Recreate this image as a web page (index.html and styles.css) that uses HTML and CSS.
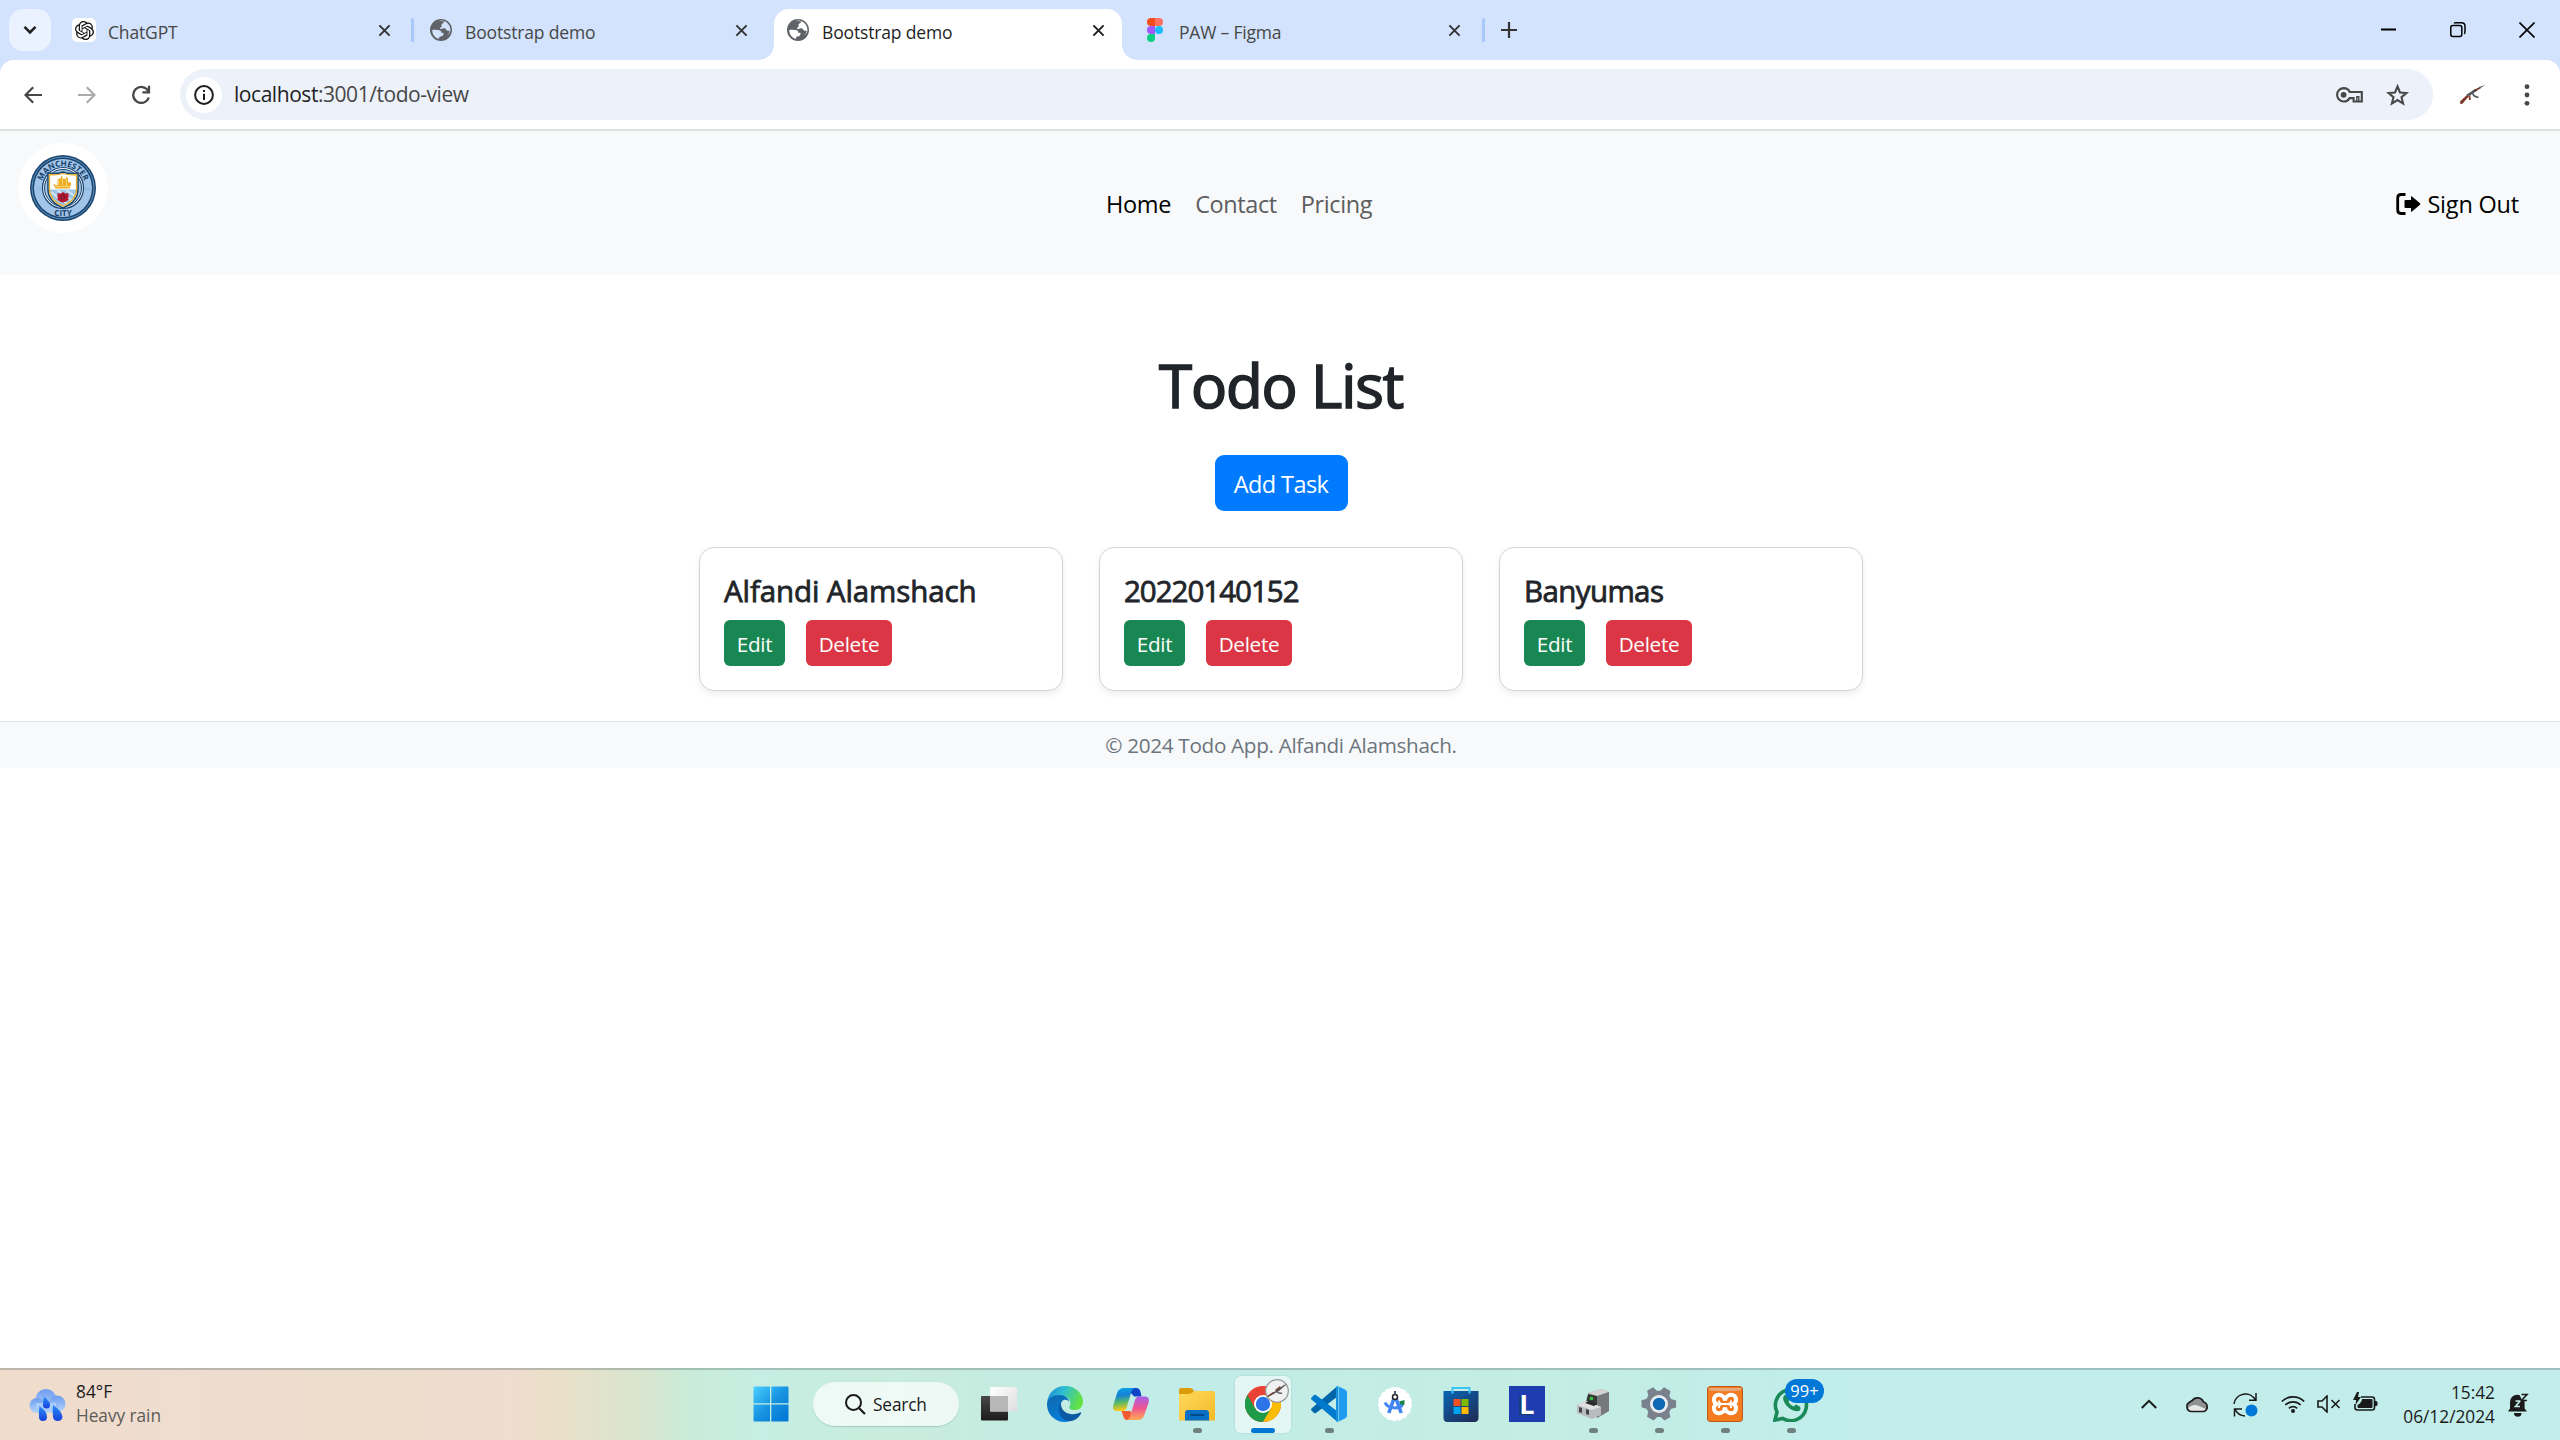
FILE: index.html
```html
<!DOCTYPE html>
<html lang="en">
<head>
<meta charset="utf-8">
<title>Bootstrap demo</title>
<link rel="stylesheet" href="styles.css">
</head>
<body>
<svg width="0" height="0" class="defs">
  <defs>
    <symbol id="x" viewBox="0 0 14 14"><path d="M1.500 1.500l11 11M12.500 1.500l-11 11" stroke="currentColor" stroke-width="2.100" fill="none"/></symbol>
    <symbol id="globe" viewBox="2 2 20 20"><circle cx="12" cy="12" r="10" fill="#5f6368"/><path fill="var(--tab)" d="M4 12c2-.6 5 0 6.500.2 1.500.2 1.800 1 1.600 2.300h2.200c-.1 2-.5 3-1.900 3.200-1.400.1-2.200.4-2.200 2.300C6.500 19.300 4 16 4 12zm6-8c1.500-.4 3.500-.3 4.800.2-.2 1.200-.8 1.900-1.800 2-.6.800-.9 1.400-.4 2.200.2 1-.5 1.300-1.400 1.400-.4.900 0 1.300 1.400 1.400.9-.8 1.900-1.100 3.300-.6 1 1.500 2 2.400 4 2.100-.3 1.700-1.200 3.500-2.300 4.700 1.800-1.500 3-3.600 3-5.400 0-4-3-7.800-7-8.400C12 3.200 11 3.500 10 4z"/></symbol>
  </defs>
</svg>

<header class="tabstrip">
  <button class="tab-search"><svg width="14" height="10" viewBox="0 0 14 10"><path d="M1.500 1.800L7 7.300l5.500-5.500" fill="none" stroke="#1f1f1f" stroke-width="2.600"/></svg></button>
  <div class="tab first">
    <span class="gpt"><svg width="19" height="19" viewBox="0 0 24 24"><path fill="#111" d="M22.280 9.820a5.980 5.980 0 00-.52-4.910 6.050 6.050 0 00-6.510-2.900A6.070 6.070 0 004.980 4.180a5.980 5.980 0 00-4 2.900 6.050 6.050 0 00.740 7.100 5.980 5.980 0 00.510 4.910 6.050 6.050 0 006.510 2.900A5.980 5.980 0 0013.260 24a6.060 6.060 0 005.770-4.210 5.990 5.990 0 004-2.900 6.060 6.060 0 00-.75-7.070zm-9.020 12.610a4.480 4.480 0 01-2.880-1.040l.14-.08 4.780-2.760a.8.8 0 00.39-.68v-6.740l2.020 1.170a.07.07 0 01.04.05v5.580a4.500 4.500 0 01-4.490 4.500zM3.600 18.300a4.470 4.470 0 01-.54-3.010l.14.090 4.780 2.760a.77.77 0 00.78 0l5.840-3.370v2.330a.08.08 0 01-.03.060L9.740 19.950a4.500 4.500 0 01-6.140-1.650zM2.340 7.900a4.490 4.490 0 012.370-1.970V11.600a.77.77 0 00.39.68l5.810 3.350-2.020 1.170a.08.08 0 01-.07 0l-4.830-2.790A4.500 4.500 0 012.340 7.900zm16.600 3.860L13.100 8.360l2.020-1.160a.08.08 0 01.07 0l4.830 2.790a4.490 4.490 0 01-.68 8.110v-5.680a.79.79 0 00-.4-.66zm2.010-3.020l-.14-.09-4.770-2.780a.78.78 0 00-.79 0L9.410 9.230V6.900a.07.07 0 01.03-.06l4.830-2.790a4.500 4.500 0 016.680 4.660zM8.310 12.860l-2.020-1.160a.08.08 0 01-.04-.06V6.070a4.500 4.500 0 017.380-3.450l-.14.080-4.780 2.760a.8.8 0 00-.39.680zm1.100-2.360l2.600-1.500 2.610 1.500v3l-2.600 1.500-2.610-1.500z"/></svg></span>
    <span class="tab-title">ChatGPT</span>
    <svg class="close"><use href="#x"/></svg>
  </div>
  <i class="sep"></i>
  <div class="tab second">
    <svg class="fav"><use href="#globe"/></svg>
    <span class="tab-title demo">Bootstrap demo</span>
    <svg class="close"><use href="#x"/></svg>
  </div>
  <div class="tab active">
    <svg class="fav"><use href="#globe"/></svg>
    <span class="tab-title demo">Bootstrap demo</span>
    <svg class="close"><use href="#x"/></svg>
  </div>
  <div class="tab fourth">
    <svg width="16" height="24" viewBox="0 0 16 24"><path d="M4 0h4v8H4a4 4 0 010-8z" fill="#f24e1e"/><path d="M8 0h4a4 4 0 010 8H8z" fill="#ff7262"/><path d="M4 8h4v8H4a4 4 0 010-8z" fill="#a259ff"/><circle cx="12" cy="12" r="4" fill="#1abcfe"/><path d="M4 16h4v4a4 4 0 11-4-4z" fill="#0acf83"/></svg>
    <span class="tab-title figma">PAW – Figma</span>
    <svg class="close"><use href="#x"/></svg>
  </div>
  <i class="sep"></i>
  <svg class="plus" width="16" height="16" viewBox="0 0 16 16"><path d="M8 0v16M0 8h16" stroke="#333" stroke-width="2.200"/></svg>
  <div class="window-buttons">
    <svg width="16" height="16" viewBox="0 0 16 16"><path d="M0 7.500h15" stroke="#000" stroke-width="2"/></svg>
    <svg width="16" height="16" viewBox="0 0 16 16" fill="none" stroke="#000" stroke-width="1.500"><rect x=".8" y="3.500" width="11" height="11" rx="2"/><path d="M4 1.300Q4.500.8 6 .8h5.500Q15 .8 15 4.300v5.500q0 1.500-.8 2"/></svg>
    <svg width="16" height="16" viewBox="0 0 16 16"><path d="M.5.500l15 15M15.500.500l-15 15" stroke="#000" stroke-width="1.600"/></svg>
  </div>
</header>

<div class="toolbar-back">
  <div class="toolbar">
    <svg width="18" height="18" viewBox="0 0 18 18" fill="none" stroke="#474747" stroke-width="2.200"><path d="M18 9H1.800M9.200 1.200L1.500 9l7.700 7.800"/></svg>
    <svg width="18" height="18" viewBox="0 0 18 18" fill="none" stroke="#ababab" stroke-width="2.200"><path d="M0 9h16.200M8.800 1.200L16.500 9l-7.700 7.800"/></svg>
    <svg width="20" height="20" viewBox="0 0 20 20" fill="none" stroke="#474747" stroke-width="2.300"><path d="M17.800 12.500A8 8 0 1117.200 6M18 .8v6.600h-6.600"/></svg>
    <div class="omnibox">
      <span class="chip"><svg width="20" height="20" viewBox="0 0 20 20"><circle cx="10" cy="10" r="8.900" fill="none" stroke="#1f1f1f" stroke-width="2"/><path d="M9 5h2v2.100H9zM9 8.800h2V15H9z" fill="#1f1f1f"/></svg></span>
      <span class="url"><b>localhost</b>:3001/todo-view</span>
      <svg width="27" height="16" viewBox="0 0 27 16"><path d="M7.800 1.100a6.700 6.700 0 100 13.400c2.700 0 4.700-1.500 5.800-3.400h4v3.400h8.200V5h-12A6.700 6.700 0 007.800 1.100z" fill="none" stroke="#474747" stroke-width="2.100"/><circle cx="7.600" cy="7.800" r="2.900" fill="#474747"/><path d="M20.800 14V9.800h2V14" fill="none" stroke="#474747" stroke-width="1.400"/></svg>
      <svg class="star" width="23" height="22" viewBox="0 0 23 22"><path d="M11.500 2.500l2.500 6 6.500.5-5 4.200 1.600 6.400-5.600-3.500-5.600 3.500 1.600-6.400-5-4.200 6.500-.5z" fill="none" stroke="#474747" stroke-width="2.100"/></svg>
    </div>
    <svg class="profile" width="26" height="20" viewBox="0 0 26 20"><path d="M0 16.500l7-6.500 2 1-5.500 6.500-1.500 1.500h-1.500z" fill="#7a3526"/><path d="M6 10l9-6 2.500 1.500L9 11z" fill="#4d5457"/><path d="M14 5l6-3.300.8 1.500L15 6.500z" fill="#74352a"/><path d="M19 2l6.500-2-5.500 3.200z" fill="#555"/><path d="M8.500 11l1.800-1 .5 5H9z" fill="#863d2b"/><path d="M12.500 8q1 4 6 4.300" fill="none" stroke="#59656a" stroke-width="1.800"/></svg>
    <svg class="dots" width="6" height="22" viewBox="0 0 6 22" fill="#474747"><circle cx="3" cy="2.700" r="2.400"/><circle cx="3" cy="11" r="2.400"/><circle cx="3" cy="19.300" r="2.400"/></svg>
  </div>
</div>

<div class="page">
  <nav class="navbar">
    <span class="brand">
      <svg width="66" height="66" viewBox="0 0 66 66">
        <defs><path id="arcTop" d="M10.800 33.500a22.200 22.200 0 0144.400 0"/></defs>
        <circle cx="33" cy="33" r="33" fill="#1c4470"/><circle cx="33" cy="33" r="31" fill="none" stroke="#5d95bd" stroke-width="1"/><circle cx="33" cy="33" r="29" fill="#a0c5e8"/>
        <circle cx="33" cy="33" r="20.500" fill="#e9f2fa" stroke="#1c4470" stroke-width="1.200"/><circle cx="33" cy="33" r="18.500" fill="#a0c5e8" stroke="#1c4470" stroke-width="1"/>
        <path d="M18 18q8 1.500 15-1 7 2.500 15 1v16c0 9-6 15-15 19-9-4-15-10-15-19z" fill="#fff" stroke="#17406b" stroke-width="1.500"/>
        <path d="M19.500 34.500h27c0 8-5.500 13-13.500 16.500-8-3.500-13.500-8.500-13.500-16.500z" fill="#9cc5e8"/><path d="M21 37l16 12M27 35l15 10.500M36 35l9.500 6.500" stroke="#d3e6f4" stroke-width="2"/>
        <path d="M19.500 19.500q7 1 13.500-1 6.500 2 13.500 1v15c0 8-5.500 13-13.500 16.500-8-3.500-13.500-8.500-13.500-16.500z" fill="none" stroke="#e5b42f" stroke-width="1.300"/>
        <path d="M23 29q3 1.500 4.500 1v-5.500l3.500-1.500v-2l1.500.500v2l3.500.500v-2l2 1v4l3 .5v2l-1.500 4h-14z" fill="#eead25"/><path d="M28.500 25v5M32.500 23v7M36.500 24v7M25 31.500h15" stroke="#f9dd8c" stroke-width=".8"/>
        <path d="M33 37l2.300 1.500 3-.3.400 3-.8 2.400 1 .9-2.900 2-3 .9-3-.9-2.900-2 1-.9-.8-2.400.4-3 3 .3z" fill="#b9122e"/><circle cx="33" cy="42" r="2" fill="none" stroke="#5d2438" stroke-width="1"/>
        <text class="crest-name"><textPath href="#arcTop" startOffset="50%" text-anchor="middle">MANCHESTER</textPath></text>
        <text class="crest-city" x="33" y="60.800" text-anchor="middle">CITY</text>
        <text class="crest-year" x="8.800" y="35.500" text-anchor="middle">18</text><text class="crest-year" x="57.200" y="35.500" text-anchor="middle">94</text>
      </svg>
    </span>
    <div class="links"><a class="home">Home</a><a class="contact">Contact</a><a class="pricing">Pricing</a></div>
    <a class="signout"><svg width="25" height="22" viewBox="0 0 25 22"><path d="M9.500 1.500H5Q1.700 1.500 1.700 5v12q0 3.500 3.300 3.500h4.500" fill="none" stroke="#000" stroke-width="2.800"/><path d="M8.500 8q0-1 1-1H15V4q0-1.300 1-.5l8 6.800q.8.700 0 1.400l-8 6.800q-1 .8-1-.5v-3H9.500q-1 0-1-1z" fill="#000"/></svg><span>Sign Out</span></a>
  </nav>
  <main>
    <h1>Todo List</h1>
    <a class="btn add">Add Task</a>
    <section class="cards">
      <article class="card"><h5 class="name">Alfandi Alamshach</h5><div class="actions"><a class="btn edit">Edit</a><a class="btn delete">Delete</a></div></article>
      <article class="card"><h5 class="number">20220140152</h5><div class="actions"><a class="btn edit">Edit</a><a class="btn delete">Delete</a></div></article>
      <article class="card"><h5 class="city">Banyumas</h5><div class="actions"><a class="btn edit">Edit</a><a class="btn delete">Delete</a></div></article>
    </section>
  </main>
  <footer class="footer">© 2024 Todo App. Alfandi Alamshach.</footer>
</div>

<div class="taskbar">
  <div class="weather">
    <svg width="37" height="34" viewBox="0 0 37 34"><defs><linearGradient id="cl" x2="0" y2="1"><stop stop-color="#6e9cf0"/><stop offset="1" stop-color="#b5d6fb"/></linearGradient><linearGradient id="dr" x2="0" y2="1"><stop stop-color="#2a8df5"/><stop offset="1" stop-color="#1740dd"/></linearGradient></defs><circle cx="17" cy="10.500" r="10.500" fill="url(#cl)"/><circle cx="28" cy="15" r="8.500" fill="url(#cl)"/><circle cx="8" cy="16.500" r="7.500" fill="url(#cl)"/><rect x="7" y="14" width="20" height="9.500" fill="#a9cdfa"/><g fill="url(#dr)"><path d="M15 7.500q6.500 5.500 6 8.500a3.500 3.500 0 01-7 0q0-4 1-8.500z"/><path d="M10.500 17q8 6 7.500 11a4 4 0 01-8 0q-.5-6 .5-11z"/><path d="M24 16q9 6 9.500 12a4.800 4.800 0 01-9.500 0q-.8-6 0-12z"/></g></svg>
    <div class="weather-text"><span class="deg">84°F</span><span class="rain">Heavy rain</span></div>
  </div>

  <div class="apps">
    <span class="app"><svg width="36" height="36" viewBox="0 0 36 36"><defs><linearGradient id="win" gradientUnits="userSpaceOnUse" x1="0" y1="0" x2="36" y2="36"><stop stop-color="#4bd2ff"/><stop offset=".5" stop-color="#1793e2"/><stop offset="1" stop-color="#0073d3"/></linearGradient></defs><path fill="url(#win)" d="M1.500.5H17v16.700H.5V1.500q0-1 1-1zM18.300.5h16.200q1 0 1 1v15.700H18.300zM.5 18.500H17v17H1.500q-1 0-1-1zM18.300 18.500h17.200v16q0 1-1 1H18.300z"/></svg></span>
    <span class="search"><svg width="21" height="21" viewBox="0 0 21 21"><circle cx="8.500" cy="8.500" r="7.500" fill="none" stroke="#1a1a1a" stroke-width="2"/><path d="M14 14l6 6" stroke="#1a1a1a" stroke-width="2.200"/></svg><span>Search</span></span>
    <span class="app"><svg width="36" height="36" viewBox="0 0 36 36"><defs><linearGradient id="tv" x2="0" y2="1"><stop stop-color="#484848"/><stop offset="1" stop-color="#1c1c1c"/></linearGradient><linearGradient id="tw" x2="1" y2="1"><stop stop-color="#fff"/><stop offset="1" stop-color="#ddd"/></linearGradient></defs><rect y="10" width="27" height="24.500" rx="1" fill="url(#tv)"/><rect x="9" y="1" width="27" height="24.500" rx="1" fill="url(#tw)"/><path d="M9 10h18v15.500H9z" fill="#b7b7b7"/></svg></span>
    <span class="app"><svg width="36" height="36" viewBox="0 0 36 36"><defs><linearGradient id="e1" x2="1" y2=".3"><stop stop-color="#1989dc"/><stop offset=".5" stop-color="#31bfcf"/><stop offset="1" stop-color="#62e146"/></linearGradient><linearGradient id="e2" x2=".5" y2="1"><stop stop-color="#0e66ac"/><stop offset="1" stop-color="#087fdc"/></linearGradient></defs><path d="M0 17C1 6 9 0 18 0c11 0 18 8 18 15.500 0 5-3.500 8.500-8 8.500-4.500 0-6.500-1.500-5.500-3.500 3-4.500-1-10.500-8-10.500C7 10 1 13 0 17z" fill="url(#e1)"/><path d="M0 17C1 12 6 9 12.500 9c5.500 0 9.500 3.500 9.800 7-1-1.500-2.300-2.300-4-2.300-3 0-4.500 2.500-4.300 6C14.500 27 20 33 27 33c-3 2.300-6 3-9 3C8 36 0 28.500 0 18.500z" fill="url(#e2)"/><path d="M14 17c-4 4-3 12 3 16.500 7 4 14 0 17-6 .5-1 0-1.500-1-1-3 1.500-6.500 2-9.500 1.500C18 27 13.500 23 14 17z" fill="#0c59a4"/></svg></span>
    <span class="app"><svg width="36" height="34" viewBox="0 0 36 34"><defs><linearGradient id="c1" x2=".1" y2="1"><stop stop-color="#0aa7e8"/><stop offset=".35" stop-color="#1680d8"/><stop offset=".65" stop-color="#55b96a"/><stop offset="1" stop-color="#fbc816"/></linearGradient><linearGradient id="c2" x2="0" y2="1"><stop stop-color="#a65de8"/><stop offset=".5" stop-color="#f0558e"/><stop offset="1" stop-color="#ffac55"/></linearGradient></defs><path d="M18 1h5q3.500 0 4.500 4l1 4.500h-7.500L17 5z" fill="#1143c7"/><path d="M8.500 24h9L20 33h-6q-2.500 0-3.500-3z" fill="#f25b32"/><path d="M11 1h10.500Q19 2 18 6l-4.500 15q-1 3-4 3H4q-5 0-3.700-6L4 6.500Q5.500 1 11 1z" fill="url(#c1)"/><path d="M32 9.500h-6q-3 0-4 3.500L17.500 28Q16.500 32 14 33h11q5 0 6.500-5.500l4-11.500Q37 9.500 32 9.500z" fill="url(#c2)"/></svg></span>
    <span class="app run"><svg width="36" height="36" viewBox="0 0 36 36"><defs><linearGradient id="fo" x2="1" y2="1"><stop stop-color="#ffd95e"/><stop offset="1" stop-color="#f4ba27"/></linearGradient></defs><path d="M0 4q0-2 2-2h9q2 0 3.500 2L17 8H0z" fill="#dc9b08"/><path d="M0 8h10q3 0 5-3h19q2 0 2 2v27.500H0z" fill="url(#fo)"/><path d="M6 34.500V27q0-3 3-3h18q3 0 3 3v7.500z" fill="#096fc5"/><path d="M11 29h14" stroke="#054782" stroke-width="1.800"/></svg></span>
    <span class="app current"><svg width="36" height="36" viewBox="0 0 36 36"><circle cx="18" cy="18" r="18" fill="#ea4335"/><path d="M2.400 9A18 18 0 0018 36l8-13.500L10.200 22.500z" fill="#1e9a48"/><path d="M18 36A18 18 0 0033.600 9H18l7.800 13.500z" fill="#fbbc04"/><circle cx="18" cy="18" r="9" fill="#fff"/><circle cx="18" cy="18" r="7.200" fill="#2b75e8"/></svg><svg class="avatar" width="24" height="24" viewBox="0 0 24 24"><circle cx="12" cy="12" r="11.300" fill="#f0f1f1" stroke="#999" stroke-width="1.200"/><path d="M1 18l8-5 10-7 3-1-8 7-9 5z" fill="#555"/><path d="M2 17l6-4 1 1-6 4zM10 11l5-4 1 2-5 3z" fill="#734033"/><path d="M12 12q1 3 5 2" stroke="#666" stroke-width="1.500" fill="none"/></svg></span>
    <span class="app run"><svg width="36" height="36" viewBox="0 0 36 36"><path d="M26.500 0v10.500L5 27q-1 .6-2 0l-2.500-2.500q-.8-1 0-2z" fill="#0065a9"/><path d="M26.500 36V25.500L5 9q-1-.6-2 0L.5 11.500q-.8 1 0 2z" fill="#007acc"/><path d="M26.500 0l7.500 3.500q2 1 2 3v23q0 2-2 3L26.500 36q1 0 1-2V2q0-2-1-2z" fill="#1f9cf0"/><path d="M27 0v36l-2-1V1z" fill="#1590df"/></svg></span>
    <span class="app"><svg width="36" height="36" viewBox="0 0 36 36"><circle cx="18" cy="18" r="16.300" fill="#fff"/><circle cx="18" cy="18" r="16.300" fill="none" stroke="#fff" stroke-width="1.500" stroke-dasharray="4 2"/><path d="M22 15.500l5.500-1.500v4.500L24 21z" fill="#188544"/><path d="M18 9.500L11.800 27M18 9.500L24.200 27" stroke="#4285f4" stroke-width="3.600"/><path d="M8 16.500q2 5 10 5.500 5 0 7.500-3" fill="none" stroke="#4285f4" stroke-width="3"/><circle cx="18" cy="11" r="2.500" fill="#fff" stroke="#222" stroke-width="1.500"/><path d="M18 5v3.500" stroke="#456" stroke-width="2"/></svg></span>
    <span class="app"><svg width="36" height="36" viewBox="0 0 36 36"><defs><linearGradient id="st" x2=".7" y2="1"><stop stop-color="#0866b6"/><stop offset="1" stop-color="#1e305d"/></linearGradient></defs><path d="M.5 5h35v27q0 4-4 4h-27q-4 0-4-4z" fill="url(#st)"/><path d="M9.500 7.500V2h17v5.500" fill="none" stroke="#3cc4f5" stroke-width="2"/><path d="M10.500 13h7v7h-7z" fill="#f25022"/><path d="M18.500 13h7v7h-7z" fill="#7fba00"/><path d="M10.500 21h7v7h-7z" fill="#00a4ef"/><path d="M18.500 21h7v7h-7z" fill="#ffb900"/></svg></span>
    <span class="app"><span class="ell">L</span></span>
    <span class="app run"><svg width="34" height="34" viewBox="0 0 34 34"><path d="M12 6l14-4 7 3v19l-12 7-9-8z" fill="#a7a7a7"/><path d="M12 6l14-4 7 3-12 4z" fill="#d3d3d3"/><path d="M21 9l12-4v19l-12 7z" fill="#77787a"/><path d="M12 7l9 2v9l-11-3z" fill="#333837"/><circle cx="15.500" cy="11.500" r="1.800" fill="#34c841"/><path d="M1 18l9-4 15 6v8l-9 4-15-6z" fill="#b9bbbd"/><path d="M1 18l9-4 15 6-9 3z" fill="#dedfe0"/><path d="M3 20l3 1v5l-3-1zM10 22l3 1v5l-3-1z" fill="#424446"/><path d="M9 16l9 3 3-2-8-3z" fill="#252827"/></svg></span>
    <span class="app run"><svg width="36" height="36" viewBox="0 0 36 36"><path d="M14 1l7.500 0 1.500 5 3 1.600 5-1.200 3.500 6L31 16v4l3.500 3.600-3.500 6-5-1.200-3 1.600-1.500 5H14l-1.500-5-3-1.600-5 1.200-3.500-6L4.500 20v-4L1 12.400l3.500-6 5 1.200 3-1.600z" transform="rotate(30 18 18)" fill="#79828c"/><circle cx="18" cy="18" r="9" fill="#e9edef"/><circle cx="18" cy="18" r="6.200" fill="#0c68b5"/></svg></span>
    <span class="app run"><svg width="36" height="36" viewBox="0 0 36 36"><rect width="36" height="36" rx="4" fill="#bf5a14"/><rect x="1" y="1" width="34" height="34" rx="3" fill="#f47b20"/><path d="M2 2h32v2.500Q18 6 2 4.500z" fill="#e8a67b"/><path d="M18 14.500C19 7 29.500 7 29 14q0 2.500-2.500 4 2.500 1.500 2.500 4C29.500 29 19 29 18 21.500 17 29 6.500 29 7 22q0-2.500 2.500-4Q7 16.500 7 14C6.500 7 17 7 18 14.500z" fill="none" stroke="#fff" stroke-width="4"/><path d="M12 14.500v.8q0 2.700 3 2.700h6q3 0 3 2.700v1.300M24 14.500v.8q0 2.700-3 2.700h-6q-3 0-3 2.700v1.300" fill="none" stroke="#fff" stroke-width="1.800"/></svg></span>
    <span class="app run"><svg width="36" height="36" viewBox="0 0 36 36"><path d="M2 34l2-8A15.500 15.500 0 1110 32.500z" fill="none" stroke="#1c8a58" stroke-width="3.600"/><path d="M12 9c-6 3 4 18 14 16 2-1 2-4 0-5l-3-1.500-2.500 2c-3-1.500-4-3-5-5l1.500-2L15 9.500q-1-1.500-3-.5z" fill="#1c8a58"/></svg><span class="badge">99+</span></span>
  </div>

  <div class="tray">
    <svg width="16" height="10" viewBox="0 0 16 10"><path d="M.8 9L8 1.800 15.200 9" fill="none" stroke="#1a1a1a" stroke-width="2"/></svg>
    <svg class="cloud" width="25" height="18" viewBox="0 0 25 18"><path d="M6 16.500A5 5 0 015 7q.5-1 2-1.200A6.500 6.500 0 0118.500 7a5 5 0 01.5 9.500z" fill="#8f9292"/><path d="M2 14q6-6 12-3l9 4q-1 1.500-4 1.500H6q-3 0-4-2.500z" fill="#e7e9e9"/><path d="M6 16.500A5 5 0 015 7q.5-1 2-1.200A6.500 6.500 0 0118.500 7a5 5 0 01.5 9.500z" fill="none" stroke="#1c1c1c" stroke-width="1.700"/></svg>
    <svg class="sync" width="25" height="25" viewBox="0 0 25 25"><path d="M1 12A11.500 11.500 0 0122.500 8M23 1v7.300h-7M12 24A11.500 11.500 0 012 17M1.500 24.500V17H9" fill="none" stroke="#1a1a1a" stroke-width="1.500"/><circle cx="18.500" cy="18.500" r="6" fill="#0078d7"/></svg>
    <svg class="wifi" width="24" height="18" viewBox="0 0 24 18"><path d="M.8 6.500a15.700 15.700 0 0122.400 0M4.300 10a11 11 0 0115.400 0M7.900 13.300a6 6 0 018.200 0" fill="none" stroke="#1a1a1a" stroke-width="1.700"/><circle cx="12" cy="16" r="2" fill="#1a1a1a"/></svg>
    <svg class="vol" width="24" height="18" viewBox="0 0 24 18"><path d="M1 6h4l5-5v16l-5-5H1zM14.500 5l8 8M22.500 5l-8 8" fill="none" stroke="#1a1a1a" stroke-width="1.600"/></svg>
    <svg class="bat" width="25" height="20" viewBox="0 0 25 20"><path d="M8 5h11q2.500 0 2.500 2.500v8Q21.500 18 19 18H4.500Q2 18 2 15.500V12" fill="none" stroke="#1a1a1a" stroke-width="1.600"/><path d="M9 7h9.500q1 0 1 1v7q0 1-1 1h-13q-1 0-1-1v-2q4-2 4.500-6zM22 9h1q1.500 0 1.500 1.500v2Q24.500 14 23 14h-1z" fill="#1a1a1a"/><path d="M4 0L0 8h3.200L2.500 13 8 5H5l1-5z" fill="#1a1a1a"/></svg>
    <div class="clock"><span class="time">15:42</span><span class="date">06/12/2024</span></div>
    <svg class="bell" width="21" height="24" viewBox="0 0 21 24"><path d="M0 18.500l2-3V9a7.300 7.300 0 0114.600 0v6.500l2.400 3zM6 20h7.500a3.700 3.700 0 01-7.500 0z" fill="#1a1a1a"/><path d="M7.500 8h4.500l-4.500 5.500H12" fill="none" stroke="#c4edea" stroke-width="1.600"/><path d="M11 .5h8v7h-5z" fill="#c4edea"/><path d="M13.500 1.500h5.500l-5.500 6H19" fill="none" stroke="#1a1a1a" stroke-width="1.600"/></svg>
  </div>
</div>
</body>
</html>
```
FILE: styles.css
```css
* { box-sizing: border-box; }
body {
  margin: 0;
  width: 2560px;
  height: 1440px;
  overflow: hidden;
  display: flex;
  flex-direction: column;
  background: #fff;
  font-family: "Open Sans", "Noto Sans", sans-serif;
  color: #212529;
}
svg { flex: none; display: block; }
span, a, h1, h5 { white-space: nowrap; }
.defs { position: absolute; }

/* tab strip */
.tabstrip { height: 60px; flex: none; display: flex; align-items: center; background: #d3e3fd; padding-left: 9px; --tab: #d3e3fd; }
.tab-search { width: 42px; height: 42px; border: 0; border-radius: 14px; background: #eaf2ff; display: flex; align-items: center; justify-content: center; padding: 0; }
.tab { display: flex; align-items: center; color: #474747; }
.tab-title { font-size: 17.5px; line-height: 24px; flex: 1; margin-left: 12px; padding-top: 3px; letter-spacing: -.15px; }
.tab-title.demo { margin-left: 13px; }
.close { width: 13px; height: 13px; color: #333; }
.tab .fav { width: 22px; height: 22px; }
.tab.first { width: 320px; margin-left: 21px; }
.tab.first .close { margin-right: 1px; }
.gpt { width: 24px; height: 24px; background: #fff; border-radius: 5px; display: flex; align-items: center; justify-content: center; }
.sep { width: 3px; height: 24px; background: #a8c7fa; border-radius: 2px; margin-left: 19px; }
.tab.second { margin-left: 16px; width: 318px; }
.tab.active { position: relative; align-self: flex-end; height: 51px; width: 348px; margin-left: 26px; padding: 0 17px 9px 13px; background: #fff; border-radius: 15px 15px 0 0; color: #1f1f1f; --tab: #fff; }
.tab.active .close { color: #1f1f1f; }
.tab.active::before, .tab.active::after { content: ""; position: absolute; bottom: 0; width: 15px; height: 15px; }
.tab.active::before { right: 100%; background: radial-gradient(circle at 0 0, transparent 14.5px, #fff 15px); }
.tab.active::after { left: 100%; background: radial-gradient(circle at 100% 0, transparent 14.5px, #fff 15px); }
.tab.fourth { margin-left: 25px; width: 314px; }
.tab.fourth .tab-title { margin-left: 16px; letter-spacing: -.2px; }
.tab.fourth + .sep { margin-left: 21px; }
.plus { margin-left: 16px; }
.window-buttons { margin-left: auto; padding-right: 25px; display: flex; gap: 53px; }

/* toolbar */
.toolbar-back { background: #d3e3fd; flex: none; }
.toolbar { height: 71px; display: flex; align-items: center; padding: 0 30px 0 24px; background: #fff; border-radius: 14px 14px 0 0; border-bottom: 2px solid #dfe1e1; }
.toolbar > svg + svg { margin-left: 36px; }
.toolbar > svg:nth-child(3) { margin-left: 35px; }
.omnibox { margin-left: 29px; width: 2253px; height: 51px; border-radius: 26px; background: #ecf1fa; display: flex; align-items: center; padding: 0 24px 0 6px; }
.chip { width: 36px; height: 36px; border-radius: 50%; background: #fff; display: flex; align-items: center; justify-content: center; }
.url { font-size: 21px; line-height: 30px; margin-left: 12px; flex: 1; color: #474747; letter-spacing: -.45px; padding-bottom: 1px; }
.url b { font-weight: 400; color: #1f1f1f; }
.star { margin-left: 23px; }
.profile { margin-left: 27px; }
.toolbar > .dots { margin-left: auto; }

/* page */
.page { flex: 1; }
.navbar { height: 144px; background: #f8f9fa; display: flex; padding: 0 41px 0 18px; }
.brand { width: 90px; height: 90px; margin-top: 12px; border-radius: 50%; background: #fff; display: flex; align-items: center; justify-content: center; }
.crest-name { font: 700 8px "Open Sans", sans-serif; fill: #17406b; }
.crest-city { font: 700 8px "Open Sans", sans-serif; fill: #17406b; }
.crest-year { font: 5px "Open Sans", sans-serif; fill: #7faed6; }
.links { display: flex; align-items: center; margin-left: 998px; gap: 24px; font-size: 23.500px; line-height: 36px; padding-top: 2px; color: #5d5e5f; letter-spacing: -.4px; }
.links .home { color: #000; letter-spacing: -.3px; }
.signout { margin-left: auto; display: flex; align-items: center; gap: 6px; font-size: 23.500px; line-height: 36px; letter-spacing: -.2px; color: #000; padding-top: 2px; }
main { display: flex; flex-direction: column; align-items: center; padding-left: 2px; }
h1 { margin: 68px 0 0; font-size: 60px; font-weight: 400; line-height: 84px; letter-spacing: -1.1px; -webkit-text-stroke: 1.7px #212529; }
.btn { display: flex; align-items: center; justify-content: center; color: #fff; }
.btn.add { width: 133px; height: 56px; margin-top: 28px; padding-top: 2px; border-radius: 9px; background: #007bff; font-size: 23.500px; letter-spacing: -.6px; }
.cards { display: flex; gap: 36px; margin-top: 36px; }
.card { width: 364px; height: 144px; border: 1px solid #d2d3d4; border-radius: 15px; padding: 23px 24px; box-shadow: 0 3px 6px rgba(0,0,0,.075); }
h5 { margin: 0; font-size: 29.500px; font-weight: 400; line-height: 40px; -webkit-text-stroke: .8px #212529; }
.name { letter-spacing: -.1px; }
.number { letter-spacing: -1px; }
.city { letter-spacing: -.6px; }
.actions { display: flex; gap: 21px; margin-top: 9px; }
.edit, .delete { height: 46px; border-radius: 6px; font-size: 20.700px; letter-spacing: -.3px; padding-top: 1px; }
.edit { width: 61px; background: #198754; }
.delete { width: 86px; background: #dc3545; }
.footer { margin-top: 30px; height: 47px; border-top: 1px solid #dee2e6; background: #f8f9fa; color: #6c757d; font-size: 20.700px; letter-spacing: -.32px; line-height: 46px; text-align: center; padding-left: 2px; }

/* taskbar */
.taskbar { height: 72px; flex: none; position: relative; display: flex; border-top: 2px solid rgba(90,110,110,.35); background: linear-gradient(90deg, #f0dccb 0, #efddd0 190px, #ecddcc 370px, #efddd0 510px, #ebdfc8 550px, #d9e5cf 640px, #c9ecd9 690px, #c6eee2 760px, #c8ecdd 900px, #c1ece8 1170px, #c4ede2 1500px, #c1edea 1800px, #c2edea 2560px); background-origin: border-box; background-clip: border-box; }
.weather { display: flex; width: 738px; padding: 10px 0 0 29px; gap: 10px; }
.weather > svg { margin-top: 9px; }
.weather-text, .clock { display: flex; flex-direction: column; font-size: 17.3px; line-height: 24px; }
.deg { color: #1a1a1a; }
.rain { color: #5c5b58; letter-spacing: -.05px; }
.apps { display: flex; align-items: center; }
.app { width: 66px; height: 70px; display: flex; align-items: center; justify-content: center; position: relative; flex: none; }
.app > svg:first-child { margin-top: -2px; }
.search { width: 146px; height: 44px; margin: -2px 7px 0 9px; padding-left: 32px; gap: 7px; border-radius: 22px; background: rgba(255,255,255,.7); box-shadow: 0 1px 1px rgba(0,80,60,.2); display: flex; align-items: center; font-size: 17.3px; letter-spacing: -.15px; color: #1a1a1a; }
.search > span { padding-top: 1px; }
.run::after, .current::after { content: ""; position: absolute; left: 50%; bottom: 7px; width: 9px; height: 5px; margin-left: -4.500px; border-radius: 2.500px; background: #70817f; }
.current::before { content: ""; position: absolute; left: 5px; top: 6px; width: 56px; height: 57px; border-radius: 6px; background: rgba(255,255,255,.55); box-shadow: 0 0 2px rgba(0,60,60,.2); }
.current > svg { position: relative; }
.current::after { width: 24px; margin-left: -12px; background: #0078d4; }
.current > .avatar { position: absolute; right: 7px; top: 9px; }
.ell { width: 36px; height: 36px; margin-top: -2px; background: #1d3db0; color: #fff; font-size: 27px; font-weight: 700; line-height: 35px; text-align: center; text-shadow: -2px 1px #153d65; }
.badge { position: absolute; left: 27px; top: 9px; width: 39px; height: 24px; border-radius: 12px; background: #0078d7; color: #fff; font-size: 16.500px; line-height: 24px; text-align: center; }
.tray { margin-left: auto; display: flex; align-items: center; padding-right: 31px; color: #1a1a1a; }
.tray > svg { margin-top: -3px; }
.tray > .cloud { margin-left: 28px; }
.tray > .sync { margin-left: 23px; margin-top: -1px; }
.tray > .wifi { margin-left: 23px; }
.tray > .vol { margin-left: 12px; }
.tray > .bat { margin-left: 12px; margin-top: -6px; }
.clock { width: 117px; align-items: flex-end; padding-bottom: 1px; }
.tray > .bell { margin-left: 13px; margin-top: 0; }
```
